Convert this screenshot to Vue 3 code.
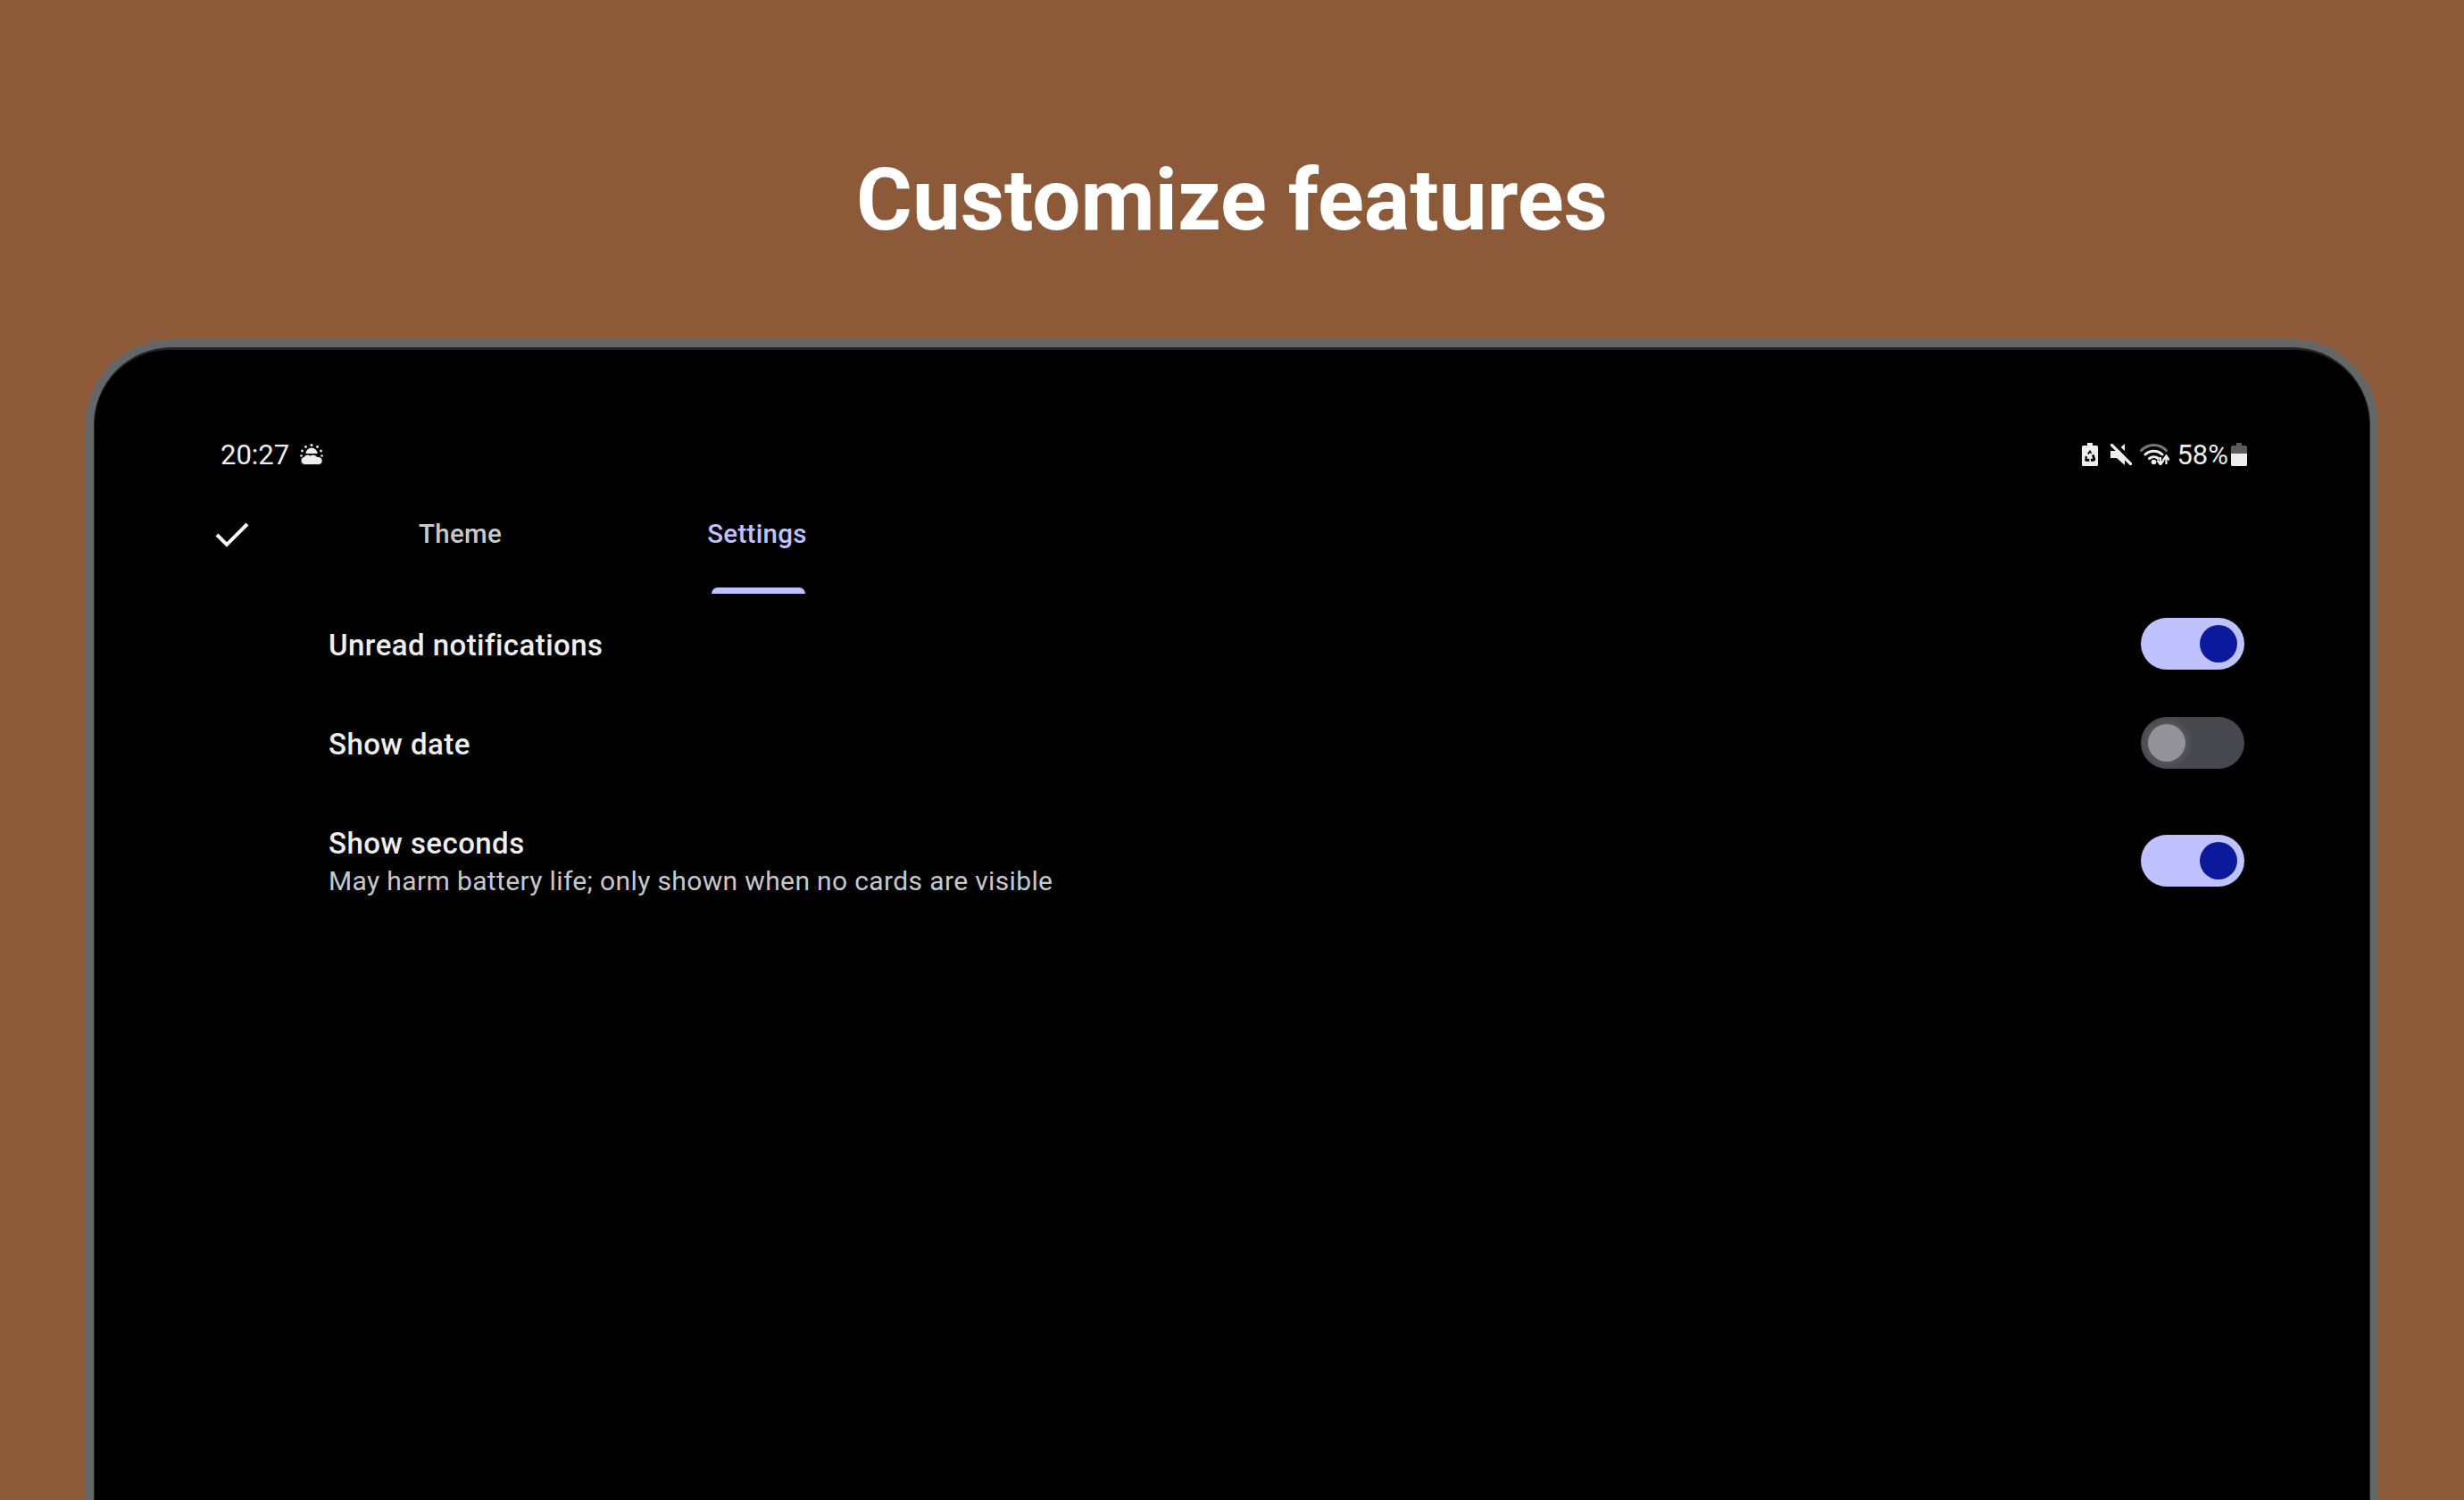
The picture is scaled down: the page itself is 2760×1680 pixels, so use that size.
<script setup>
const rows = [
  { title: 'Unread notifications', on: true },
  { title: 'Show date', on: false },
  { title: 'Show seconds', sub: 'May harm battery life; only shown when no cards are visible', on: true },
]
</script>

<template>
  <div class="page">
    <h1 class="title">Customize features</h1>
    <div class="device">
      <div class="screen">
        <div class="status">
          <div class="status-left">
            <span>20:27</span>
            <svg class="weather" viewBox="0 0 26 24" width="26" height="24">
              <g fill="#eee">
                <circle cx="13" cy="1.500" r="1.500"/>
                <circle cx="6.500" cy="3.500" r="1.400"/>
                <circle cx="19.500" cy="3.500" r="1.400"/>
                <circle cx="2.500" cy="8" r="1.400"/>
                <circle cx="23.500" cy="8" r="1.400"/>
                <circle cx="1.500" cy="13.500" r="1.300"/>
                <circle cx="24.500" cy="13.500" r="1.300"/>
              </g>
              <path d="M6.500 11a6.500 6.500 0 0 1 13 0z" fill="#eee"/>
              <path d="M5.500 23.500a4.500 4.500 0 0 1-.8-8.900C6 11.800 9.500 11.500 11.500 13.200c2.500-1.800 6-1 7.500 1.300 5-.3 6.500 3 6 5.500-.4 2-2 3.500-4.500 3.500z" fill="#eee" stroke="#000" stroke-width="0.800"/>
            </svg>
          </div>
          <div class="status-right">
            <svg viewBox="0 0 18 26" width="18" height="26">
              <path d="M6 0h6v3h4.500a1.500 1.500 0 0 1 1.500 1.500v20a1.500 1.500 0 0 1-1.500 1.500h-15A1.500 1.500 0 0 1 0 24.500v-20A1.500 1.500 0 0 1 1.500 3H6z" fill="#eee"/>
              <path d="M9 8l2.200 3-1.400 1.200L9 11l-1.300 1.900-1.700-1zM3.800 14.500l2.500 1.300-1 1.900h3v3h-3.500c-1.400 0-2-1.200-1.400-2.300zM11 14l2.500-1.300 1.600 5c.3 1.500-.6 3-2 3H10v-3h2.300z" fill="#000"/>
            </svg>
            <svg class="mute" viewBox="0 0 24 24" width="24" height="24">
              <path d="M0 8h7l9-8v24l-9-8H0z" fill="#eee"/>
              <path d="M4 -1l24 24" stroke="#000" stroke-width="4"/>
              <path d="M1.500 1.500l21 21" stroke="#eee" stroke-width="3.200" stroke-linecap="round"/>
            </svg>
            <svg class="wifi" viewBox="0 0 33 24" width="33" height="24">
              <g fill="none" stroke-width="3" stroke-linecap="round">
                <path d="M1.500 7.500c8-8 20-8 28 0" stroke="#777"/>
                <path d="M6 12c5.500-5 13.500-5 19 0" stroke="#eee"/>
                <path d="M10.500 16.500c3-2.500 7-2.500 10 0" stroke="#eee"/>
              </g>
              <circle cx="15.500" cy="20.500" r="2.800" fill="#eee"/>
              <path d="M23 15v7m-3.500-3.500l3.500 5 3.500-5" stroke="#eee" stroke-width="2.200" fill="none"/>
              <path d="M29.500 23v-8m-3.500 3.500l3.500-5 3.500 5" stroke="#eee" stroke-width="2.200" fill="none"/>
            </svg>
            <span class="pct">58%</span>
            <svg viewBox="0 0 18 26" width="18" height="26">
              <path d="M6 0h6v3h4.500a1.500 1.500 0 0 1 1.500 1.500V12H0V4.500A1.500 1.500 0 0 1 1.500 3H6z" fill="#5c5c5c"/>
              <path d="M0 12h18v12.500a1.500 1.500 0 0 1-1.500 1.500h-15A1.500 1.500 0 0 1 0 24.500z" fill="#eee"/>
            </svg>
          </div>
        </div>

        <div class="tabs">
          <svg class="check" viewBox="0 0 38 28" width="38" height="28">
            <path d="M2 14l11 11L36 2" stroke="#fff" stroke-width="4" fill="none"/>
          </svg>
          <div class="tab">Theme</div>
          <div class="tab active">Settings</div>
        </div>

        <div class="list">
          <div v-for="r in rows" :key="r.title" class="row">
            <div class="texts">
              <div class="row-title">{{ r.title }}</div>
              <div v-if="r.sub" class="row-sub">{{ r.sub }}</div>
            </div>
            <div class="toggle" :class="{ on: r.on }"><span class="thumb"></span></div>
          </div>
        </div>
      </div>
    </div>
  </div>
</template>

<style>
html, body { margin: 0; background: #8c5a39; }
</style>

<style scoped>
.page {
  width: 2760px;
  height: 1680px;
  background: #8c5a39;
  overflow: hidden;
  font-family: Roboto, "Liberation Sans", sans-serif;
  display: flex;
  flex-direction: column;
  align-items: center;
}
.title {
  margin: 167px 0 0;
  font-size: 96px;
  line-height: 114px;
  font-weight: 700;
  color: #fff;
  text-align: center;
}
.device {
  margin-top: 99px;
  width: 2568px;
  height: 1400px;
  box-sizing: border-box;
  border: 9px solid #646566;
  border-bottom: 0;
  border-radius: 96px 96px 0 0;
  background: #222;
  padding: 3px 1px 0;
}
.screen {
  height: 100%;
  background: #000;
  border-radius: 84px 84px 0 0;
  box-sizing: border-box;
  padding: 99px 140px 0 136px;
  color: #eee;
}
.status {
  display: flex;
  justify-content: space-between;
  align-items: center;
  height: 36px;
  margin: 0 -3px 0 5px;
  font-size: 31px;
  color: #eee;
}
.status-left, .status-right { display: flex; align-items: center; }
.status-left { gap: 12px; }
.mute { margin: 0 9px 0 14px; }
.wifi { margin-right: 8px; }
.pct { margin-right: 3px; }
.tabs {
  display: flex;
  align-items: center;
  height: 115px;
  margin: 23px 0 0 5px;
}
.check { margin-left: -6px; flex: none; margin-bottom: 18px; }
.tab {
  font-size: 29.500px;
  letter-spacing: 0.3px;
  font-weight: 500;
  color: #c8c8cc;
  height: 100%;
  box-sizing: border-box;
  padding-top: 31px;
  margin-left: 190px;
}
.tab.active {
  margin-left: 230px;
  color: #bfc2ff;
  position: relative;
}
.tab.active::after {
  content: "";
  position: absolute;
  left: 5px;
  right: 2px;
  bottom: 0;
  height: 7px;
  background: #bfc2ff;
  border-radius: 7px 7px 0 0;
}
.list { padding-left: 126px; }
.row {
  display: flex;
  justify-content: space-between;
  align-items: center;
  box-sizing: border-box;
  min-height: 111px;
}
.texts { padding-top: 4px; }
.row:last-child { padding: 32.500px 0; }
.row-title {
  font-size: 33px;
  letter-spacing: 0.44px;
  font-weight: 500;
  color: #eeeeee;
  line-height: 42px;
}
.row-sub {
  font-size: 30px;
  letter-spacing: 0.36px;
  color: #c8c8cc;
  line-height: 42px;
}
.toggle {
  width: 116px;
  height: 58px;
  border-radius: 29px;
  background: #47474f;
  position: relative;
  overflow: hidden;
  flex: none;
}
.thumb {
  position: absolute;
  top: 8px;
  left: 8px;
  width: 42px;
  height: 42px;
  border-radius: 50%;
  background: #939298;
  box-shadow: 0 0 6px 5px rgba(255, 255, 255, 0.08);
}
.toggle.on { background: #bfc2ff; }
.toggle.on .thumb {
  left: auto;
  right: 8px;
  background: #0a1a9a;
  box-shadow: none;
}
</style>
